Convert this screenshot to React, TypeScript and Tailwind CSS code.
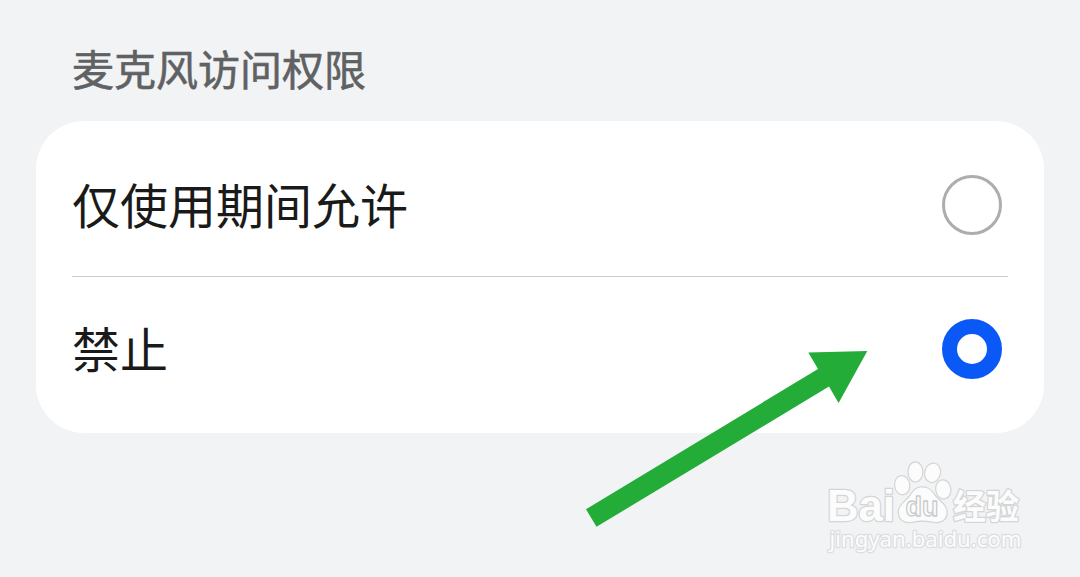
import { clsx } from 'clsx';
import { useState } from 'react';

interface Option {
  id: string;
  label: string;
}

interface PermissionGroupProps {
  title: string;
  options: Option[];
  defaultValue: string;
}

const options: Option[] = [
  { id: 'while-using', label: '仅使用期间允许' },
  { id: 'deny', label: '禁止' },
];

const PermissionGroup = function PermissionGroup({
  title,
  options,
  defaultValue,
}: PermissionGroupProps) {
  const [selected, setSelected] = useState(defaultValue);

  return (
    <section className="flex flex-col px-9 pt-[37px]">
      <h2 className="h-[84px] pl-9 text-[42px] leading-[62px] text-[#606162] [-webkit-text-stroke:0.6px_#606162]">
        {title}
      </h2>

      <div
        aria-label={title}
        className="flex flex-col divide-y divide-[#cbcbcb] rounded-[48px] bg-white px-9 py-3"
        role="radiogroup"
      >
        {options.map((option) => (
          <button
            aria-checked={option.id === selected}
            className="flex h-36 items-center justify-between pr-1.5 text-left"
            key={option.id}
            onClick={() => setSelected(option.id)}
            role="radio"
            type="button"
          >
            <span className="pb-1 text-5xl leading-[72px] text-[#1a1a1a]">{option.label}</span>
            <span
              className={clsx(
                'size-[60px] shrink-0 rounded-full bg-white',
                option.id === selected
                  ? 'border-[15px] border-[#0a59f7]'
                  : 'border-[3px] border-[#adadad]',
              )}
            />
          </button>
        ))}
      </div>
    </section>
  );
};

const Arrow = function Arrow() {
  return (
    <svg
      aria-hidden="true"
      className="pointer-events-none absolute top-[350px] left-[585px] h-[178px] w-[283px] fill-[#24ac39]"
      viewBox="585 350 283 178"
    >
      <path d="M586 509.3 818 369 808.3 352.4 867.3 351 838.6 403 829 386.5 596.5 526.8Z" />
    </svg>
  );
};

const Watermark = function Watermark() {
  return (
    <svg
      aria-label="Baidu"
      className="pointer-events-none absolute top-[450px] left-[815px] h-[115px] w-[220px] fill-[#fcfcfc] stroke-[#d3d5d6]"
      strokeLinejoin="round"
      viewBox="0 0 220 115"
    >
      <g className="[paint-order:stroke]" strokeWidth="2.5">
        <text
          className="font-['Liberation_Sans',sans-serif] text-[44px] font-bold"
          lengthAdjust="spacingAndGlyphs"
          textLength="68"
          x="12"
          y="71"
        >
          Bai
        </text>

        {/* Paw */}
        <ellipse cx="87.2" cy="35.2" rx="7" ry="9" transform="rotate(-8 87.2 35.2)" />
        <ellipse cx="100.4" cy="21.9" rx="6.8" ry="9.5" />
        <ellipse cx="117.6" cy="22.8" rx="7.3" ry="9.2" transform="rotate(14 117.6 22.8)" />
        <ellipse cx="128.3" cy="39.4" rx="7" ry="9" transform="rotate(-8 128.3 39.4)" />
        <path d="M107.5 37.5C113.5 37.5 116.5 41 119.500 45.500S131.500 54.500 131.500 62C131.500 68.500 127.500 72 121.500 72C117 72 114 70.500 107.500 70.500S98.500 72 94 72C88 72 84 68.500 84 62C84 54.500 91.500 51.500 95.500 45.500S101.500 37.500 107.500 37.500Z" />

        <text
          className="font-['Noto_Sans_CJK_SC',sans-serif] text-[34px] font-bold"
          lengthAdjust="spacingAndGlyphs"
          textLength="66"
          x="138"
          y="69"
        >
          经验
        </text>
        <text
          className="stroke-[#dcdedf] font-['Noto_Sans',sans-serif] text-[22px]"
          lengthAdjust="spacingAndGlyphs"
          textLength="192"
          x="14.5"
          y="96.5"
        >
          jingyan.baidu.com
        </text>
      </g>
      <text
        className="stroke-[#c9cbcc] font-['Liberation_Sans',sans-serif] text-[27px] font-bold"
        lengthAdjust="spacingAndGlyphs"
        strokeWidth="1.3"
        textLength="33"
        x="90.5"
        y="66"
      >
        du
      </text>
    </svg>
  );
};

export default function App() {
  return (
    <main className="relative h-[577px] w-[1080px] overflow-hidden bg-[#f1f3f5] font-['Noto_Sans_CJK_SC',sans-serif]">
      <PermissionGroup defaultValue="deny" options={options} title="麦克风访问权限" />
      <Arrow />
      <Watermark />
    </main>
  );
}
